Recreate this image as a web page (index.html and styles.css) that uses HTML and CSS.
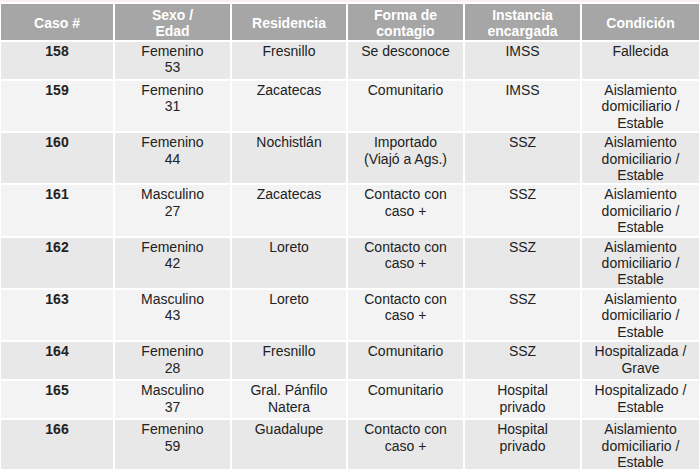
FILE: index.html
```html
<!DOCTYPE html>
<html lang="es">
<head>
<meta charset="utf-8">
<link rel="stylesheet" href="styles.css">
<title>Casos</title>
</head>
<body>
<table class="cases">
  <colgroup>
    <col class="c1"><col class="c2"><col class="c3"><col class="c4"><col class="c5"><col class="c6">
  </colgroup>
  <thead>
    <tr>
      <th>Caso #</th>
      <th>Sexo /<br>Edad</th>
      <th>Residencia</th>
      <th>Forma de<br>contagio</th>
      <th>Instancia<br>encargada</th>
      <th>Condición</th>
    </tr>
  </thead>
  <tbody>
    <tr class="odd">
      <td class="num">158</td><td>Femenino<br>53</td><td>Fresnillo</td><td>Se desconoce</td><td>IMSS</td><td>Fallecida</td>
    </tr>
    <tr class="even">
      <td class="num">159</td><td>Femenino<br>31</td><td>Zacatecas</td><td>Comunitario</td><td>IMSS</td><td>Aislamiento<br>domiciliario /<br>Estable</td>
    </tr>
    <tr class="odd">
      <td class="num">160</td><td>Femenino<br>44</td><td>Nochistlán</td><td>Importado<br>(Viajó a Ags.)</td><td>SSZ</td><td>Aislamiento<br>domiciliario /<br>Estable</td>
    </tr>
    <tr class="even">
      <td class="num">161</td><td>Masculino<br>27</td><td>Zacatecas</td><td>Contacto con<br>caso +</td><td>SSZ</td><td>Aislamiento<br>domiciliario /<br>Estable</td>
    </tr>
    <tr class="odd">
      <td class="num">162</td><td>Femenino<br>42</td><td>Loreto</td><td>Contacto con<br>caso +</td><td>SSZ</td><td>Aislamiento<br>domiciliario /<br>Estable</td>
    </tr>
    <tr class="even">
      <td class="num">163</td><td>Masculino<br>43</td><td>Loreto</td><td>Contacto con<br>caso +</td><td>SSZ</td><td>Aislamiento<br>domiciliario /<br>Estable</td>
    </tr>
    <tr class="odd">
      <td class="num">164</td><td>Femenino<br>28</td><td>Fresnillo</td><td>Comunitario</td><td>SSZ</td><td>Hospitalizada /<br>Grave</td>
    </tr>
    <tr class="even">
      <td class="num">165</td><td>Masculino<br>37</td><td>Gral. Pánfilo<br>Natera</td><td>Comunitario</td><td>Hospital<br>privado</td><td>Hospitalizado /<br>Estable</td>
    </tr>
    <tr class="odd">
      <td class="num">166</td><td>Femenino<br>59</td><td>Guadalupe</td><td>Contacto con<br>caso +</td><td>Hospital<br>privado</td><td>Aislamiento<br>domiciliario /<br>Estable</td>
    </tr>
  </tbody>
</table>
</body>
</html>
```
FILE: styles.css
```css
html, body {
  margin: 0;
  padding: 0;
  background: #f8eff1;
  overflow: hidden;
}

.cases {
  margin: 2px 0 0 -1px;
  width: 700px;
  table-layout: fixed;
  border-collapse: collapse;
  font-family: "Liberation Sans", Arial, sans-serif;
  font-size: 14px;
  color: #222;
}

.c1 { width: 114px; }
.c2 { width: 117px; }
.c3 { width: 116px; }
.c4 { width: 117px; }
.c5 { width: 117px; }
.c6 { width: 119px; }

.cases th,
.cases td {
  border: 2px solid #ffffff;
  text-align: center;
}

.cases th {
  background: #a6a6a6;
  color: #ffffff;
  font-weight: bold;
  line-height: 16px;
  height: 35px;
  padding: 1px 2px 0;
  vertical-align: middle;
}

.cases td {
  line-height: 16.4px;
  vertical-align: top;
  padding: 1px 2px 0;
  height: 36px;
}

.odd td { background: #e8e8e8; }
.even td { background: #f3f3f3; }

.cases td.num { font-weight: bold; }
```
